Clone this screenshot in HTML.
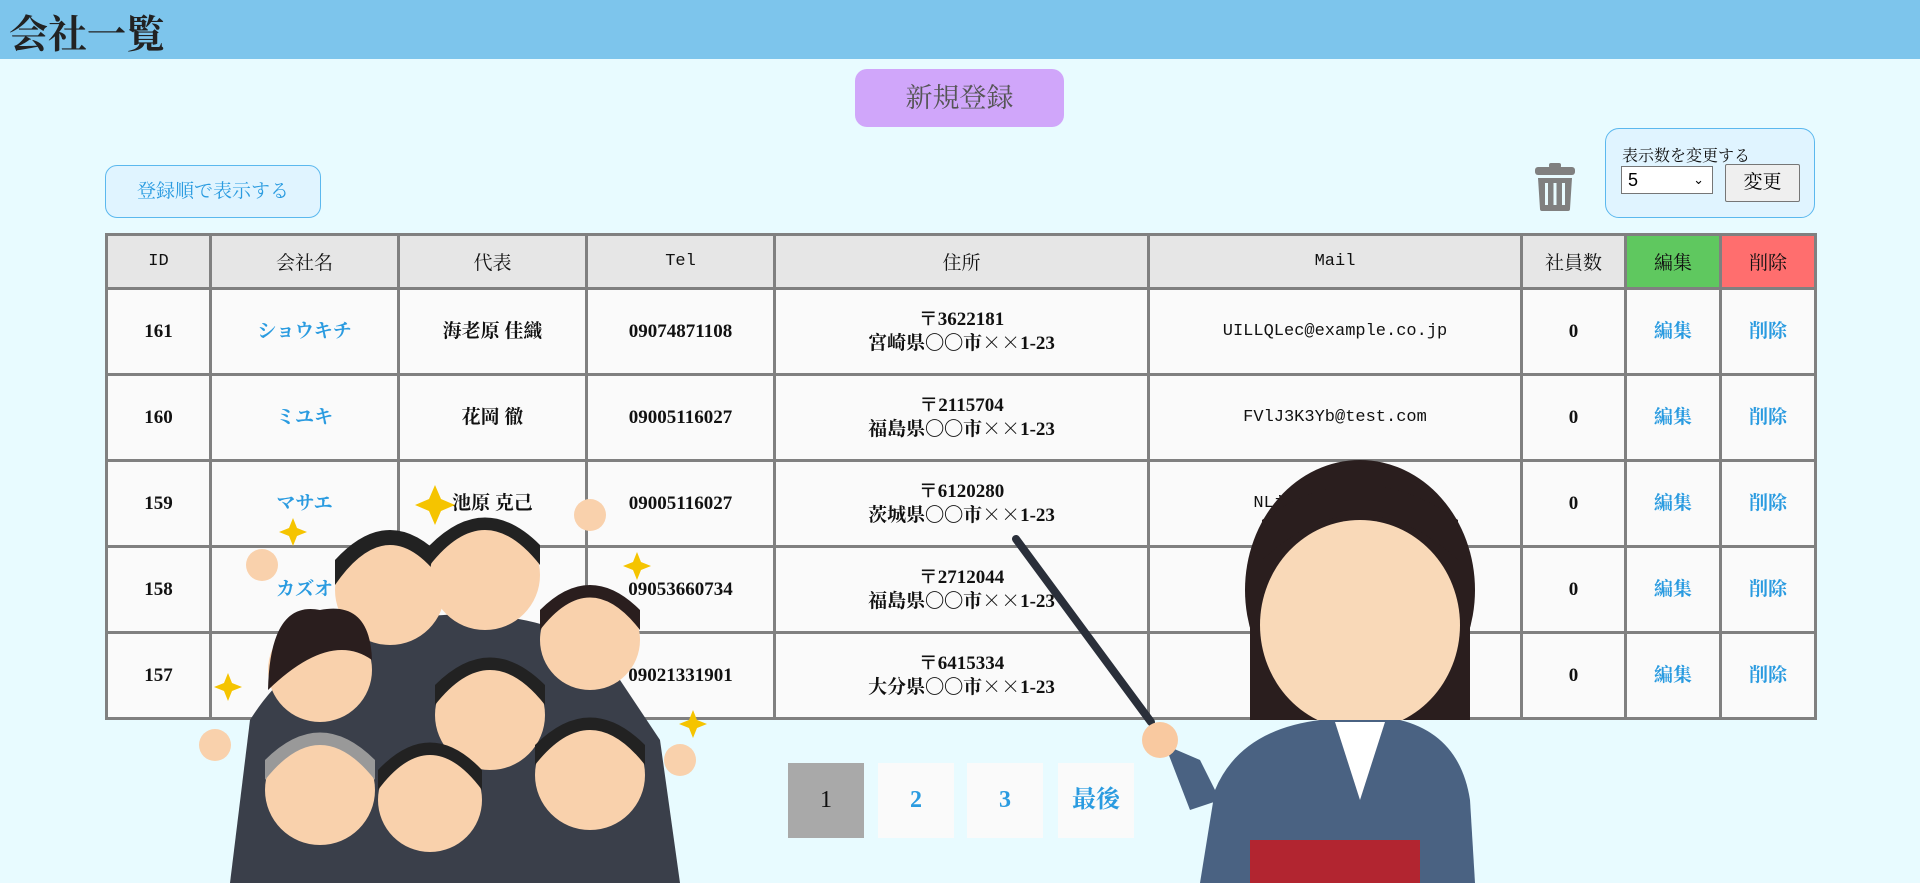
<!DOCTYPE html>
<html><head><meta charset="utf-8"><style>
*{box-sizing:border-box;margin:0;padding:0}
body{width:1920px;height:883px;overflow:hidden;background:#e8fbff;font-family:"Liberation Serif","Noto Serif CJK SC",serif;position:relative}
.hdr{position:absolute;left:0;top:0;width:1920px;height:59px;background:#7dc5ec}
.hdr h1{position:absolute;left:9px;top:9px;font-size:39px;font-weight:bold;color:#222;line-height:46px;font-family:"Noto Serif CJK SC",serif}
.new{position:absolute;left:855px;top:69px;width:209px;height:58px;background:#d0a6fa;border-radius:12px;color:#555;font-size:27px;text-align:center;line-height:58px}
.ord{position:absolute;left:105px;top:165px;width:216px;height:53px;border:1px solid #5bb8ee;background:#e0f4ff;border-radius:12px;color:#2a9be0;font-size:19px;text-align:center;line-height:51px}
.box{position:absolute;left:1605px;top:128px;width:210px;height:90px;border:1px solid #5bb8ee;background:#e0f4ff;border-radius:14px}
.box .l{position:absolute;left:16px;top:14px;font-size:16px;color:#111}
.box .s{position:absolute;left:15px;top:37px;width:92px;height:28px;border:1px solid #767676;background:#fff;font-family:"Liberation Sans",sans-serif;font-size:18px;line-height:26px;padding-left:6px}
.box .s span{position:absolute;right:8px;top:0;font-size:13px}
.box .b{position:absolute;left:119px;top:35px;width:75px;height:38px;border:1px solid #767676;background:#efefef;border-radius:2px;font-size:19px;text-align:center;line-height:36px}
table{position:absolute;left:105px;top:233px;border-collapse:collapse;background:#fafafa}
td,th{border:3px solid #808080;text-align:center;font-size:19px;font-weight:bold;color:#111}
th{height:54px;background:#e6e6e6;font-weight:normal}
td{height:86px;line-height:22px}
.m{font-family:"Liberation Mono","Noto Serif CJK SC",monospace;font-weight:normal;font-size:17px}
.bl{color:#2a9be0}
.x{font-family:"Noto Serif CJK SC",serif}
th.g{background:#5fc85f}th.r{background:#ff6e6e}
.pg{position:absolute;top:763px;width:76px;height:75px;background:#fafafa;color:#2a9be0;font-size:24px;font-weight:bold;text-align:center;line-height:75px}
</style></head><body>
<div class="hdr"><h1>会社一覧</h1></div>
<div class="new">新規登録</div>
<div class="ord">登録順で表示する</div>
<svg style="position:absolute;left:1535px;top:163px" width="40" height="48" viewBox="0 0 40 48"><rect x="14" y="0" width="12" height="5" rx="2" fill="#808080"/><rect x="0" y="4" width="40" height="8" rx="3" fill="#808080"/><path d="M3 15h34l-2 31a2 2 0 0 1-2 2H7a2 2 0 0 1-2-2z" fill="#808080"/><rect x="10" y="20" width="3" height="22" fill="#e8fbff"/><rect x="18.5" y="20" width="3" height="22" fill="#e8fbff"/><rect x="27" y="20" width="3" height="22" fill="#e8fbff"/></svg>
<div class="box"><div class="l">表示数を変更する</div><div class="s">5<span>⌄</span></div><div class="b">変更</div></div>
<table>
<tr><th class="m" style="width:104px">ID</th><th style="width:188px">会社名</th><th style="width:188px">代表</th><th class="m" style="width:188px">Tel</th><th style="width:374px">住所</th><th class="m" style="width:373px">Mail</th><th style="width:104px">社員数</th><th class="g" style="width:95px">編集</th><th class="r" style="width:95px">削除</th></tr>
<tr><td>161</td><td class="bl">ショウキチ</td><td>海老原 佳織</td><td>09074871108</td><td>〒3622181<br>宮崎県〇〇市<span class="x">××</span>1-23</td><td class="m">UILLQLec@example.co.jp</td><td>0</td><td class="bl">編集</td><td class="bl">削除</td></tr>
<tr><td>160</td><td class="bl">ミユキ</td><td>花岡 徹</td><td>09005116027</td><td>〒2115704<br>福島県〇〇市<span class="x">××</span>1-23</td><td class="m">FVlJ3K3Yb@test.com</td><td>0</td><td class="bl">編集</td><td class="bl">削除</td></tr>
<tr><td>159</td><td class="bl">マサエ</td><td>池原 克己</td><td>09005116027</td><td>〒6120280<br>茨城県〇〇市<span class="x">××</span>1-23</td><td class="m">NLjw@example.com</td><td>0</td><td class="bl">編集</td><td class="bl">削除</td></tr>
<tr><td>158</td><td class="bl">カズオ</td><td>森 正</td><td>09053660734</td><td>〒2712044<br>福島県〇〇市<span class="x">××</span>1-23</td><td class="m">CO@example.com</td><td>0</td><td class="bl">編集</td><td class="bl">削除</td></tr>
<tr><td>157</td><td class="bl">ヒロシ</td><td>山田 太郎</td><td>09021331901</td><td>〒6415334<br>大分県〇〇市<span class="x">××</span>1-23</td><td class="m">E6@example.com</td><td>0</td><td class="bl">編集</td><td class="bl">削除</td></tr>
</table>
<div class="pg" style="left:788px;background:#a9a9a9;color:#111;font-weight:normal">1</div>
<div class="pg" style="left:878px">2</div>
<div class="pg" style="left:967px">3</div>
<div class="pg" style="left:1058px">最後</div>
<svg style="position:absolute;left:0;top:0" width="1920" height="883">
<line x1="1016" y1="539" x2="1151" y2="722" stroke="#2a2f3a" stroke-width="8" stroke-linecap="round"/>
<ellipse cx="1360" cy="590" rx="115" ry="130" fill="#2a1e1e"/>
<rect x="1250" y="590" width="220" height="130" fill="#2a1e1e"/>
<ellipse cx="1360" cy="625" rx="100" ry="105" fill="#f9d9b8"/>
<path d="M1262 560 Q1360 470 1458 560 L1458 520 Q1360 450 1262 520z" fill="#2a1e1e"/>
<rect x="1330" y="700" width="60" height="40" fill="#f9d9b8"/>
<path d="M1200 883 L1215 790 Q1240 730 1320 720 L1400 720 Q1460 735 1470 800 L1475 883z" fill="#4a6282"/>
<path d="M1335 722 L1360 800 L1385 722z" fill="#fff"/>
<path d="M1165 745 L1200 760 L1220 800 L1190 810z" fill="#4a6282"/>
<circle cx="1160" cy="740" r="18" fill="#f9c9a0"/>
<rect x="1250" y="840" width="170" height="43" fill="#b22530"/>
<path d="M230 883 L250 720 Q300 640 400 620 Q520 600 600 650 L660 740 L680 883z" fill="#3a3f4a"/>
<circle cx="390" cy="590" r="55" fill="#f9d1ac"/><path d="M335 585 Q390 505 445 585 L445 560 Q390 500 335 560z" fill="#222"/>
<circle cx="485" cy="575" r="55" fill="#f9d1ac"/><path d="M430 565 Q485 495 540 565 L540 545 Q485 490 430 545z" fill="#222"/>
<circle cx="590" cy="640" r="50" fill="#f9d1ac"/><path d="M540 630 Q590 565 640 630 L640 610 Q590 560 540 610z" fill="#2a1e1e"/>
<circle cx="320" cy="670" r="52" fill="#f9d1ac"/><path d="M268 690 Q270 600 320 610 Q370 600 372 660 Q330 630 268 690z" fill="#2a1e1e"/>
<circle cx="490" cy="715" r="55" fill="#f9d1ac"/><path d="M435 705 Q490 635 545 705 L545 685 Q490 630 435 685z" fill="#222"/>
<circle cx="320" cy="790" r="55" fill="#f9d1ac"/><path d="M265 780 Q320 710 375 780 L375 760 Q320 705 265 760z" fill="#999"/>
<circle cx="430" cy="800" r="52" fill="#f9d1ac"/><path d="M378 790 Q430 720 482 790 L482 770 Q430 715 378 770z" fill="#222"/>
<circle cx="590" cy="775" r="55" fill="#f9d1ac"/><path d="M535 765 Q590 695 645 765 L645 745 Q590 690 535 745z" fill="#222"/>
<circle cx="262" cy="565" r="16" fill="#f9d1ac"/><circle cx="590" cy="515" r="16" fill="#f9d1ac"/><circle cx="215" cy="745" r="16" fill="#f9d1ac"/><circle cx="680" cy="760" r="16" fill="#f9d1ac"/>
<path d="M435 485 l6 14 14 6 -14 6 -6 14 -6-14 -14-6 14-6z" fill="#f5c400"/>
<path d="M293 518 l4 10 10 4 -10 4 -4 10 -4-10 -10-4 10-4z" fill="#f5c400"/>
<path d="M637 552 l4 10 10 4 -10 4 -4 10 -4-10 -10-4 10-4z" fill="#f5c400"/>
<path d="M228 673 l4 10 10 4 -10 4 -4 10 -4-10 -10-4 10-4z" fill="#f5c400"/>
<path d="M693 710 l4 10 10 4 -10 4 -4 10 -4-10 -10-4 10-4z" fill="#f5c400"/>
</svg>
</body></html>
